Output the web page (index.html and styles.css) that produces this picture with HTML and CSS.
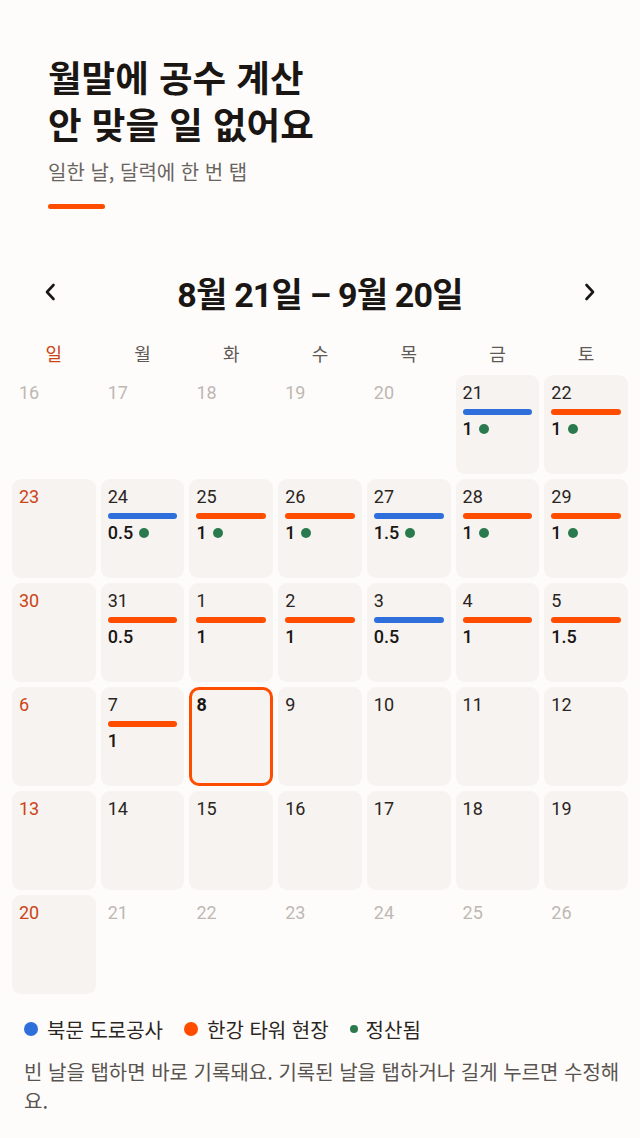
FILE: index.html
```html
<!DOCTYPE html>
<html lang="ko">
<head>
<meta charset="utf-8">
<title>공수 달력</title>
<link rel="stylesheet" href="styles.css">
</head>
<body>
<header class="hero">
  <h1 class="title">월말에 공수 계산<br>안 맞을 일 없어요</h1>
  <p class="sub">일한 날, 달력에 한 번 탭</p>
  <div class="accent"></div>
</header>

<nav class="month-nav">
  <button class="nav-btn" aria-label="이전">
    <svg width="14" height="20" viewBox="0 0 14 20"><polyline points="10.5,3 4,10 10.5,17" fill="none" stroke="#1a1614" stroke-width="2.6" stroke-linecap="round" stroke-linejoin="round"/></svg>
  </button>
  <div class="month-title">8월 21일 – 9월 20일</div>
  <button class="nav-btn" aria-label="다음">
    <svg width="14" height="20" viewBox="0 0 14 20"><polyline points="3.5,3 10,10 3.5,17" fill="none" stroke="#1a1614" stroke-width="2.6" stroke-linecap="round" stroke-linejoin="round"/></svg>
  </button>
</nav>

<div class="weekdays">
  <span class="sun">일</span><span>월</span><span>화</span><span>수</span><span>목</span><span>금</span><span>토</span>
</div>

<div class="grid">
  <div class="cell out"><span class="num">16</span></div>
  <div class="cell out"><span class="num">17</span></div>
  <div class="cell out"><span class="num">18</span></div>
  <div class="cell out"><span class="num">19</span></div>
  <div class="cell out"><span class="num">20</span></div>
  <div class="cell"><span class="num">21</span><i class="bar blue"></i><span class="val">1<b class="dot"></b></span></div>
  <div class="cell"><span class="num">22</span><i class="bar orange"></i><span class="val">1<b class="dot"></b></span></div>

  <div class="cell sunday"><span class="num">23</span></div>
  <div class="cell"><span class="num">24</span><i class="bar blue"></i><span class="val">0.5<b class="dot"></b></span></div>
  <div class="cell"><span class="num">25</span><i class="bar orange"></i><span class="val">1<b class="dot"></b></span></div>
  <div class="cell"><span class="num">26</span><i class="bar orange"></i><span class="val">1<b class="dot"></b></span></div>
  <div class="cell"><span class="num">27</span><i class="bar blue"></i><span class="val">1.5<b class="dot"></b></span></div>
  <div class="cell"><span class="num">28</span><i class="bar orange"></i><span class="val">1<b class="dot"></b></span></div>
  <div class="cell"><span class="num">29</span><i class="bar orange"></i><span class="val">1<b class="dot"></b></span></div>

  <div class="cell sunday"><span class="num">30</span></div>
  <div class="cell"><span class="num">31</span><i class="bar orange"></i><span class="val">0.5</span></div>
  <div class="cell"><span class="num">1</span><i class="bar orange"></i><span class="val">1</span></div>
  <div class="cell"><span class="num">2</span><i class="bar orange"></i><span class="val">1</span></div>
  <div class="cell"><span class="num">3</span><i class="bar blue"></i><span class="val">0.5</span></div>
  <div class="cell"><span class="num">4</span><i class="bar orange"></i><span class="val">1</span></div>
  <div class="cell"><span class="num">5</span><i class="bar orange"></i><span class="val">1.5</span></div>

  <div class="cell sunday"><span class="num">6</span></div>
  <div class="cell"><span class="num">7</span><i class="bar orange"></i><span class="val">1</span></div>
  <div class="cell today"><span class="num">8</span></div>
  <div class="cell"><span class="num">9</span></div>
  <div class="cell"><span class="num">10</span></div>
  <div class="cell"><span class="num">11</span></div>
  <div class="cell"><span class="num">12</span></div>

  <div class="cell sunday"><span class="num">13</span></div>
  <div class="cell"><span class="num">14</span></div>
  <div class="cell"><span class="num">15</span></div>
  <div class="cell"><span class="num">16</span></div>
  <div class="cell"><span class="num">17</span></div>
  <div class="cell"><span class="num">18</span></div>
  <div class="cell"><span class="num">19</span></div>

  <div class="cell sunday"><span class="num">20</span></div>
  <div class="cell out"><span class="num">21</span></div>
  <div class="cell out"><span class="num">22</span></div>
  <div class="cell out"><span class="num">23</span></div>
  <div class="cell out"><span class="num">24</span></div>
  <div class="cell out"><span class="num">25</span></div>
  <div class="cell out"><span class="num">26</span></div>
</div>

<div class="legend">
  <span class="item"><b class="ldot blue"></b>북문 도로공사</span>
  <span class="item"><b class="ldot orange"></b>한강 타워 현장</span>
  <span class="item"><b class="ldot small"></b>정산됨</span>
</div>

<p class="help">빈 날을 탭하면 바로 기록돼요. 기록된 날을 탭하거나 길게 누르면 수정해요.</p>
</body>
</html>
```
FILE: styles.css
```css
* { box-sizing: border-box; }
html, body { margin: 0; padding: 0; }
body {
  background: #fdfcfa;
  font-family: Roboto, "Noto Sans CJK KR", sans-serif;
  color: #1f1a17;
  width: 640px;
}
.hero { padding: 53px 48px 0; }
.title {
  margin: 0;
  font-family: "Noto Sans CJK KR", sans-serif;
  font-weight: 700;
  font-size: 36.5px;
  line-height: 47px;
  color: #1a1614;
}
.sub {
  margin: 11px 0 0;
  font-family: "Noto Sans CJK KR", sans-serif;
  font-size: 20px;
  line-height: 28px;
  color: #6b6561;
}
.accent {
  margin-top: 18px;
  width: 57px;
  height: 5px;
  border-radius: 3px;
  background: #ff4d00;
}
.month-nav {
  margin-top: 61px;
  height: 44px;
  padding: 0 40px 0 40px;
  display: flex;
  align-items: center;
  justify-content: space-between;
}
.nav-btn {
  border: 0;
  background: none;
  padding: 0;
  width: 20px;
  height: 24px;
  display: flex;
  align-items: center;
  justify-content: center;
}
.month-title {
  font-family: Roboto, "Noto Sans CJK KR", sans-serif;
  font-weight: 700;
  font-size: 34px;
  letter-spacing: -0.8px;
  color: #1a1614;
}
.weekdays {
  margin-top: 26px;
  padding: 0 12px;
  display: grid;
  grid-template-columns: repeat(7, 1fr);
  column-gap: 5px;
  height: 24px;
  align-items: center;
}
.weekdays span {
  text-align: center;
  font-family: "Noto Sans CJK KR", sans-serif;
  font-size: 18px;
  color: #5f5955;
}
.weekdays .sun { color: #cc4419; }
.grid {
  margin-top: 11px;
  padding: 0 12px;
  display: grid;
  grid-template-columns: repeat(7, 1fr);
  grid-auto-rows: 99px;
  gap: 5px;
}
.cell {
  background: #f6f3f0;
  border-radius: 9px;
  padding: 8px 7px 0;
  display: flex;
  flex-direction: column;
  align-items: flex-start;
}
.cell.out { background: transparent; }
.num {
  font-size: 18px;
  line-height: 20px;
  color: #2a2522;
}
.cell.out .num { color: #bdb8b3; }
.cell.sunday .num { color: #cc4419; }
.cell.today {
  border: 3px solid #ff4d00;
  border-radius: 10px;
  padding: 5px 4px 0;
}
.cell.today .num { font-weight: 700; color: #1a1614; }
.bar {
  display: block;
  margin-top: 6px;
  width: 100%;
  height: 6px;
  border-radius: 3px;
}
.bar.blue, .ldot.blue { background: #2f6fdb; }
.bar.orange, .ldot.orange { background: #ff4d00; }
.val {
  margin-top: 4px;
  font-size: 18px;
  line-height: 20px;
  font-weight: 500;
  color: #1a1614;
  display: flex;
  align-items: center;
}
.dot {
  display: inline-block;
  width: 10px;
  height: 10px;
  border-radius: 50%;
  background: #2b7a4e;
  margin-left: 6px;
}
.legend {
  margin-top: 21px;
  padding: 0 24px;
  display: flex;
  align-items: center;
  gap: 21px;
  height: 28px;
  font-family: "Noto Sans CJK KR", sans-serif;
  font-size: 20px;
  color: #2a2522;
}
.item { display: flex; align-items: center; }
.ldot {
  display: inline-block;
  width: 14px;
  height: 14px;
  border-radius: 50%;
  margin-right: 9px;
}
.ldot.small {
  width: 8px;
  height: 8px;
  background: #2b7a4e;
  margin-right: 8px;
}
.help {
  margin: 14px 0 0;
  padding: 0 10px 0 24px;
  font-family: "Noto Sans CJK KR", sans-serif;
  font-size: 20px;
  line-height: 29px;
  color: #5a5450;
}
```
